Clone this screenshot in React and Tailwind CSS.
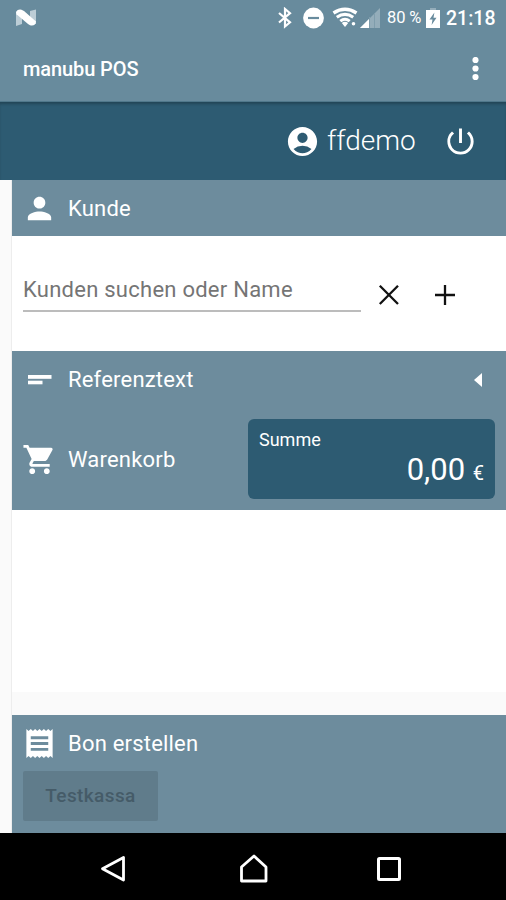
import { MdAccountCircle, MdPerson, MdPowerSettingsNew, MdReceipt, MdShoppingCart } from "react-icons/md";

function StatusBar() {
  return (
    <div className="flex h-9 items-center text-white">
      <svg className="ml-[15px] h-[18px] w-[22px]" viewBox="0 0 22 18">
        <path d="M1 2.5 L7 3 V15 L1 17 Z" fill="#bccdd6" />
        <path d="M15 2 L21 0.5 V15 L15 14 Z" fill="#bccdd6" />
        <path d="M1 3.5 Q2 0 6.5 0.7 L9 2 L21 12.5 Q20.5 17.5 15 16.3 L13 15 L1.5 5.2 Z" fill="#fff" />
      </svg>
      <div className="flex-1" />
      <svg className="h-[22px] w-[14px]" viewBox="0 0 14 22" fill="none" stroke="#fff" strokeWidth="2.2">
        <path d="M1 6 L12 15.3 L7 19.5 V2 L12 6.2 L1 15.5" />
      </svg>
      <svg className="ml-[11px] h-[22px] w-[22px]" viewBox="0 0 22 22">
        <circle cx="10.5" cy="11" r="10.4" fill="#fff" />
        <path d="M5 11 H16" stroke="#688b9d" strokeWidth="2.2" />
      </svg>
      <svg className="ml-[7px] h-[22px] w-[26px]" viewBox="0 0 26 22" fill="none" stroke="#fff">
        <path d="M1.5 6 Q13 -1.4 24.5 6" strokeWidth="3.4" />
        <path d="M4.8 10.2 Q13 4.6 21.2 10.2" strokeWidth="3.2" />
        <path d="M8.3 14.2 Q13 10.4 17.7 14.2" strokeWidth="3" />
        <path d="M9.8 16 Q13 13.6 16.2 16 L13 20 Z" fill="#fff" stroke="none" />
        <circle cx="21.5" cy="16.8" r="1.8" fill="#fff" stroke="none" />
      </svg>
      <svg className="ml-[2px] h-5 w-5" viewBox="0 0 20 20">
        <path d="M0 20 L20 0 V20 Z" fill="#94adba" />
        <path d="M0 20 L9 11 V20 Z" fill="#fff" />
        <path d="M9.5 9 V20 M14.5 5 V20" stroke="#7f9dac" />
      </svg>
      <span className="ml-[7px] w-[35px] text-[16.5px] leading-none tracking-[-0.1px] whitespace-nowrap">80 %</span>
      <svg className="ml-1 h-5 w-[14px]" viewBox="0 0 14 20">
        <path d="M4 0 H10 V2 H4 Z" fill="#94adba" />
        <path d="M0 2 H14 V20 H0 Z" fill="#fff" />
        <path d="M8.4 4.5 L3.5 11.5 H6.5 L5.6 17 L10.5 9.8 H7.5 Z" fill="#688b9d" />
      </svg>
      <span className="mr-[10px] ml-[6px] w-[50px] pt-px text-[19.5px] leading-none font-medium">21:18</span>
    </div>
  );
}

function TitleBar() {
  return (
    <div className="flex h-[66px] items-center justify-between pr-[27px] pl-[23px] text-white">
      <h1 className="text-[20px] font-medium tracking-[-0.1px]">manubu POS</h1>
      <svg className="h-6 w-[7px]" viewBox="0 0 7 24" fill="#fff">
        <circle cx="3.5" cy="3" r="3.1" />
        <circle cx="3.5" cy="11.5" r="3.1" />
        <circle cx="3.5" cy="20" r="3.1" />
      </svg>
    </div>
  );
}

function ShortTextIcon({ size }) {
  return (
    <svg width={size} height={size} viewBox="0 0 35 35" fill="#fff">
      <rect x="6" y="13" width="23.5" height="3.8" />
      <rect x="6" y="18.7" width="14.5" height="3.6" />
    </svg>
  );
}

function SectionTitle({ icon: Icon, children }) {
  return (
    <div className="-ml-px flex items-center gap-[11px] text-[22px] text-white">
      <Icon size={35} />
      <span className="tracking-[0.2px]">{children}</span>
    </div>
  );
}

function NavBar() {
  return (
    <div className="flex h-[67px] items-center bg-black pt-[5px]">
      <svg className="ml-[100px] h-7 w-[26px]" viewBox="0 0 26 28" fill="none" stroke="#fff" strokeWidth="2.8" strokeLinejoin="round">
        <path d="M23.5 2.5 V25 L2.5 13.7 Z" />
      </svg>
      <svg className="ml-[113px] h-[30px] w-[30px]" viewBox="0 0 30 30" fill="none" stroke="#fff" strokeWidth="2.8" strokeLinejoin="round">
        <path d="M15 2 L27 13 V27 H2.5 V13 Z" />
      </svg>
      <svg className="ml-[107px] h-[26px] w-[26px]" viewBox="0 0 26 26" fill="none" stroke="#fff" strokeWidth="3">
        <rect x="2.5" y="2.5" width="21" height="21" rx="1" />
      </svg>
    </div>
  );
}

export default function App() {
  return (
    <div className="flex h-[900px] w-[506px] flex-col overflow-hidden bg-[#fafafa] font-['Roboto',sans-serif]">
      <header className="h-[102px] shrink-0 border-b border-[#50788b] bg-[#688b9d]">
        <StatusBar />
        <TitleBar />
      </header>

      <div className="flex h-[78px] shrink-0 items-center justify-end bg-[#2d5b72] pr-7 text-white shadow-[inset_0_3px_3px_-1px_rgba(0,0,0,0.25)]">
        <MdAccountCircle size={35} />
        <span className="ml-[7px] w-[88px] text-[28px] leading-none font-light">ffdemo</span>
        <MdPowerSettingsNew size={35} className="ml-[28px]" />
      </div>

      <main className="ml-[11px] flex flex-1 flex-col border-l border-[#ededed]">
        <section>
          <div className="flex h-14 items-center bg-[#6d8c9d] pt-px pl-[11px]">
            <SectionTitle icon={MdPerson}>Kunde</SectionTitle>
          </div>
          <div className="flex h-[115px] items-center bg-white pt-[3px] pl-[11px]">
            <input placeholder="Kunden suchen oder Name" className="mb-[11px] h-[45px] w-[338px] border-b-2 border-[#bcbcbc] pt-[2px] text-[22px] tracking-[0.25px] outline-none placeholder:text-[#757575]" />
            <svg className="ml-[17px] h-[22px] w-[22px]" viewBox="0 0 22 22" stroke="#111" strokeWidth="2.3">
              <path d="M1.8 1.8 L20 20 M20 1.8 L1.8 20" />
            </svg>
            <svg className="ml-[34px] h-[22px] w-[22px]" viewBox="0 0 22 22" stroke="#111" strokeWidth="2.3">
              <path d="M1 11 H21 M11 1 V21" />
            </svg>
          </div>
        </section>

        <section className="h-[159px] bg-[#6d8c9d] pl-[11px]">
          <div className="flex h-[57px] items-center justify-between pr-6">
            <SectionTitle icon={ShortTextIcon}>Referenztext</SectionTitle>
            <svg className="h-[14px] w-2" viewBox="0 0 8 14" fill="#fff">
              <path d="M8 0 V14 L0 7 Z" />
            </svg>
          </div>
          <div className="flex items-center justify-between pt-[11px] pr-[11px]">
            <SectionTitle icon={MdShoppingCart}>Warenkorb</SectionTitle>
            <div className="flex h-[80px] w-[247px] flex-col rounded-md bg-[#2d5b72] px-[11px] pt-[9px] text-white">
              <span className="text-[18px] leading-6">Summe</span>
              <span className="self-end pt-px text-[31px] leading-[34px]">
                0,00 <span className="text-[20px]">€</span>
              </span>
            </div>
          </div>
        </section>

        <div className="h-[182px] bg-white" />

        <section className="mt-[23px] flex-1 bg-[#6d8c9d] pt-[11px] pl-[11px]">
          <SectionTitle icon={MdReceipt}>Bon erstellen</SectionTitle>
          <button disabled className="mt-[10px] h-[50px] w-[135px] rounded-xs bg-[#607c8b] text-[19px] font-medium tracking-[0.4px] text-[#455b68]">
            Testkassa
          </button>
        </section>
      </main>

      <NavBar />
    </div>
  );
}
